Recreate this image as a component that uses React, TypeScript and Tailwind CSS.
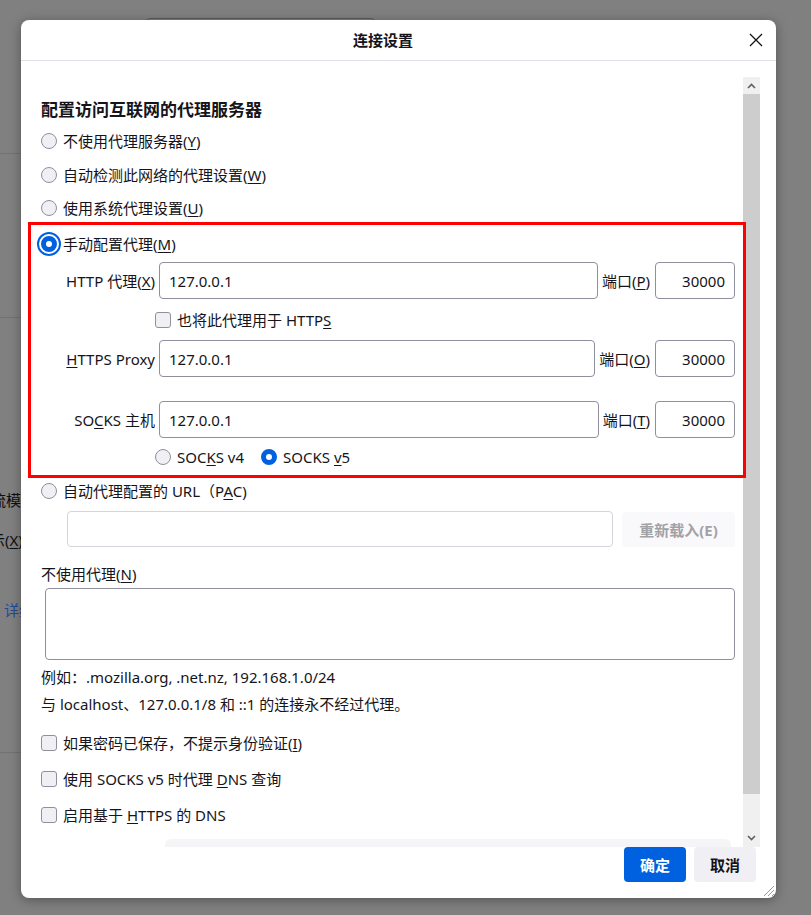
import clsx from "clsx";
import type { ReactNode } from "react";

function Radio({ checked, focused }: { checked?: boolean; focused?: boolean }) {
  return (
    <span
      className={clsx(
        "box-border block size-4 shrink-0 rounded-full",
        checked
          ? "border-[5px] border-[#0061e0] bg-white"
          : "border border-[#8f8f9d] bg-[#f0f0f4]",
        focused && "outline-2 outline-offset-2 outline-[#0061e0]",
      )}
    />
  );
}

function Checkbox() {
  return (
    <span className="box-border block size-4 shrink-0 rounded-[3px] border border-[#8f8f9d] bg-[#f0f0f4]" />
  );
}

function Key({ children }: { children: ReactNode }) {
  return <span className="underline underline-offset-2">{children}</span>;
}

function Field({ label, value, className }: { label?: string; value: string; className?: string }) {
  return (
    <div
      aria-label={label}
      className={clsx(
        "box-border flex h-full items-center rounded-[4px] border border-[#8f8f9d] bg-white px-[9px] whitespace-nowrap",
        className,
      )}
    >
      {value}
    </div>
  );
}

function ProxyRow({ label, portKey }: { label: ReactNode; portKey: string }) {
  return (
    <div className="flex h-[37px] items-center pl-[32px] pr-[8px]">
      <div className="flex w-[92px] shrink-0 justify-end whitespace-nowrap">{label}</div>
      <Field value="127.0.0.1" className="ml-[4px] min-w-0 flex-1" />
      <span className="ml-[4px] whitespace-nowrap">
        端口(<Key>{portKey}</Key>)
      </span>
      <Field value="30000" className="ml-[5px] w-[80px] shrink-0 justify-end" />
    </div>
  );
}

function Chevron({ up }: { up?: boolean }) {
  return (
    <svg width="9" height="6" viewBox="0 0 9 6">
      <polyline
        points={up ? "1,5 4.5,1.5 8,5" : "1,1 4.5,4.5 8,1"}
        fill="none"
        stroke="#606060"
        strokeWidth="1.6"
      />
    </svg>
  );
}

// the settings page behind the modal, mostly hidden by it
function BackgroundPage() {
  return (
    <div className="flex flex-col text-[15px] leading-[20px] text-[#0e0e10]">
      <div className="ml-[146px] mt-[18px] h-[24px] w-[229px] rounded-[4px] border border-[#5c5c5c]" />
      <div className="mt-[111px] h-px w-[40px] bg-[#727272]" />
      <div className="mt-[163px] h-px w-[40px] bg-[#727272]" />
      <div className="ml-[-9px] mt-[172px] whitespace-nowrap">流模式</div>
      <div className="ml-[-10px] mt-[20px] whitespace-nowrap">
        示(<Key>X</Key>)
      </div>
      <div className="ml-[4px] mt-[50px] whitespace-nowrap text-[#1f4a99]">详细</div>
      <div className="mt-[132px] h-px w-[40px] bg-[#727272]" />
    </div>
  );
}

export default function App() {
  return (
    <div className="relative h-[915px] w-[811px] overflow-hidden bg-[#808080] font-['Noto_Sans','Noto_Sans_CJK_SC',sans-serif] text-[15px] leading-[20px] text-[#15141a]">
      <BackgroundPage />

      <div className="absolute left-[21px] top-[20px] flex h-[878px] w-[755px] flex-col rounded-[8px] bg-white shadow-[0_2px_12px_rgba(0,0,0,0.35)]">
        <div className="flex h-[41px] shrink-0 items-center border-b border-[#e0e0e6]">
          <div className="flex-1 text-center font-semibold">连接设置</div>
          <button className="mr-[10px] flex w-[21px] justify-center">
            <svg width="14" height="14" viewBox="0 0 14 14">
              <path d="M1 1 L13 13 M13 1 L1 13" stroke="#15141a" strokeWidth="1.3" fill="none" />
            </svg>
          </button>
        </div>

        <div className="flex h-[786px] shrink-0">
          <div className="flex min-w-0 flex-1 flex-col pl-[20px] pr-[8px] pt-[36px]">
            <div className="flex h-[24px] items-center pt-[1px] text-[17px] font-bold">配置访问互联网的代理服务器</div>
            <div className="mt-[3px] flex h-[34px] items-center gap-[6px]">
              <Radio />
              <span>
                不使用代理服务器(<Key>Y</Key>)
              </span>
            </div>
            <div className="flex h-[34px] items-center gap-[6px]">
              <Radio />
              <span>
                自动检测此网络的代理设置(<Key>W</Key>)
              </span>
            </div>
            <div className="flex h-[30px] items-center gap-[6px] pt-[2px]">
              <Radio />
              <span>
                使用系统代理设置(<Key>U</Key>)
              </span>
            </div>

            <div className="relative z-10 ml-[-13px] mr-[-11px] flex flex-col border-[3px] border-[#ff0000]">
              <div className="flex h-[37px] items-center gap-[6px] pl-[10px]">
                <Radio checked focused />
                <span>
                  手动配置代理(<Key>M</Key>)
                </span>
              </div>
              <ProxyRow
                label={
                  <span>
                    HTTP 代理(<Key>X</Key>)
                  </span>
                }
                portKey="P"
              />
              <div className="flex h-[41px] items-center gap-[6px] pl-[124px]">
                <Checkbox />
                <span>
                  也将此代理用于 HTTP<Key>S</Key>
                </span>
              </div>
              <ProxyRow
                label={
                  <span>
                    <Key>H</Key>TTPS Proxy
                  </span>
                }
                portKey="O"
              />
              <div className="h-[24px]" />
              <ProxyRow
                label={
                  <span>
                    SO<Key>C</Key>KS 主机
                  </span>
                }
                portKey="T"
              />
              <div className="flex h-[37px] items-center pl-[124px]">
                <Radio />
                <span className="ml-[6px]">
                  SOC<Key>K</Key>S v4
                </span>
                <span className="ml-[17px]">
                  <Radio checked />
                </span>
                <span className="ml-[6px]">
                  SOCKS <Key>v</Key>5
                </span>
              </div>
            </div>

            <div className="flex h-[26px] items-center gap-[6px]">
              <Radio />
              <span>
                自动代理配置的 URL（P<Key>A</Key>C)
              </span>
            </div>
            <div className="mt-[7px] flex h-[36px] gap-[9px] pl-[26px]">
              <div className="box-border h-full flex-1 rounded-[4px] border border-[#d4d4da] bg-white" />
              <button className="mt-[1px] h-[35px] w-[113px] rounded-[4px] bg-[#f9f9fb] font-bold text-[#a2a2a6]">
                重新载入(E)
              </button>
            </div>

            <div className="mt-[15px] flex h-[24px] items-center">
              <span>
                不使用代理(<Key>N</Key>)
              </span>
            </div>
            <div className="ml-[4px] mt-[2px] box-border h-[72px] rounded-[4px] border border-[#8f8f9d] bg-white" />

            <div className="mt-[3px] flex h-[27px] items-center">例如：.mozilla.org, .net.nz, 192.168.1.0/24</div>
            <div className="flex h-[27px] items-center">与 localhost、127.0.0.1/8 和 ::1 的连接永不经过代理。</div>

            <div className="mt-[8px] flex h-[36px] items-center gap-[6px]">
              <Checkbox />
              <span>
                如果密码已保存，不提示身份验证(<Key>I</Key>)
              </span>
            </div>
            <div className="flex h-[36px] items-center gap-[6px]">
              <Checkbox />
              <span>
                使用 SOCKS v5 时代理 <Key>D</Key>NS 查询
              </span>
            </div>
            <div className="flex h-[36px] items-center gap-[6px]">
              <Checkbox />
              <span>
                启用基于 <Key>H</Key>TTPS 的 DNS
              </span>
            </div>
            <div className="ml-[124px] mr-[4px] mt-[6px] h-[8px] rounded-t-[6px] bg-[#f5f5f7]" />
          </div>

          <div className="mr-[16px] mt-[16px] flex w-[17px] shrink-0 flex-col">
            <div className="flex h-[17px] items-center justify-center bg-[#f0f0f0]">
              <Chevron up />
            </div>
            <div className="h-[700px] bg-[#cdcdcd]" />
            <div className="flex flex-1 items-end justify-center bg-[#f0f0f0] pb-[6px]">
              <Chevron />
            </div>
          </div>
        </div>

        <div className="flex h-[51px] shrink-0 items-start justify-end gap-[8px] pr-[20px]">
          <button className="h-[35px] w-[62px] rounded-[4px] bg-[#0061e0] font-bold text-white">确定</button>
          <button className="h-[35px] w-[62px] rounded-[4px] bg-[#f0f0f4] font-bold text-[#15141a]">取消</button>
        </div>

        <svg className="absolute bottom-[1px] right-[1px]" width="13" height="13" viewBox="0 0 13 13">
          <path d="M12 2 L2 12 M12 6 L6 12 M12 10 L10 12" stroke="#9a9a9a" strokeWidth="1" fill="none" />
        </svg>
      </div>
    </div>
  );
}
